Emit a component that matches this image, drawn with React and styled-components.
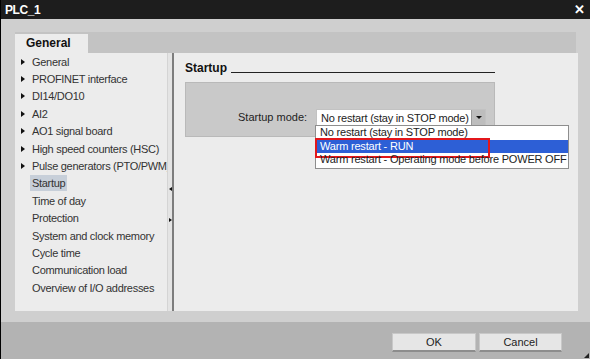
import React from "react";
import styled, { createGlobalStyle } from "styled-components";

const Global = createGlobalStyle`
  html, body { margin: 0; padding: 0; }
  body { width: 590px; height: 359px; overflow: hidden; font-family: "Liberation Sans", Arial, sans-serif; }
  * { box-sizing: border-box; }
`;

const Window = styled.div`
  width: 590px;
  height: 359px;
  display: flex;
  flex-direction: column;
  border-left: 1px solid #000;
  background: #cfcfcf;
  position: relative;
`;

const TitleBar = styled.div`
  height: 19px;
  background: #1d1d1d;
  display: flex;
  align-items: center;
  justify-content: space-between;
  padding: 0 5px 0 4px;
  color: #fff;
  font-weight: bold;
  font-size: 12px;
  letter-spacing: -0.4px;
`;

const Close = styled.span`
  font-size: 13px;
  font-weight: bold;
  line-height: 1;
`;

const Body = styled.div`
  flex: 1;
  display: flex;
  flex-direction: column;
  padding: 13px 12px 11px 14px;
  background: #cfcfcf;
`;

const TabStrip = styled.div`
  height: 21px;
  background: #c3c3c3;
  display: flex;
  align-items: flex-end;
  margin-right: 2px;
`;

const Tab = styled.div`
  width: 73px;
  height: 19px;
  background: #ececec;
  font-weight: bold;
  font-size: 12px;
  color: #111;
  padding-left: 11px;
  line-height: 19px;
`;

const Main = styled.div`
  flex: 1;
  display: flex;
  background: #ececec;
  min-height: 0;
`;

const Nav = styled.div`
  width: 152px;
  flex-shrink: 0;
  display: flex;
  flex-direction: column;
  overflow: hidden;
`;

const NavItem = styled.div`
  height: 17.4px;
  display: flex;
  align-items: center;
  font-size: 11px;
  letter-spacing: -0.3px;
  color: #333;
  white-space: nowrap;
  padding-left: 6px;
`;

const Arrow = styled.span`
  width: 11px;
  flex-shrink: 0;
  display: inline-flex;
  align-items: center;
  &::before {
    content: "";
    display: ${(p) => (p.$show ? "block" : "none")};
    border-left: 4px solid #111;
    border-top: 3px solid transparent;
    border-bottom: 3px solid transparent;
  }
`;

const Label = styled.span`
  flex-shrink: 0;
  padding: 2px;
  margin-left: -2px;
  background: ${(p) => (p.$selected ? "#c7cfd9" : "transparent")};
`;

const Splitter = styled.div`
  width: 7px;
  flex-shrink: 0;
  display: flex;
  flex-direction: column;
  background: #e4e4e4;
  border-right: 2px solid #7d7d7d;
  border-left: 1px solid #d4d4d4;
  padding-top: 134px;
  gap: 27px;
  align-items: center;
`;

const SplitArrow = styled.span`
  width: 0;
  height: 0;
  border-top: 2.5px solid transparent;
  border-bottom: 2.5px solid transparent;
  ${(p) => (p.$dir === "left" ? "border-right: 3px solid #111;" : "border-left: 3px solid #111;")}
`;

const Content = styled.div`
  flex: 1;
  padding: 7px 0 0 11px;
  position: relative;
`;

const Heading = styled.div`
  display: flex;
  align-items: flex-end;
  width: 310px;
  font-size: 12px;
  font-weight: bold;
  color: #111;
  height: 15px;
  &::after {
    content: "";
    flex: 1;
    margin-left: 4px;
    margin-bottom: 2px;
    border-bottom: 1px solid #222;
  }
`;

const GroupBox = styled.div`
  margin-top: 7px;
  width: 310px;
  height: 55px;
  background: #c9c9c9;
  border: 1px solid #b9b9b9;
  display: flex;
  align-items: flex-start;
  padding: 26px 0 0 52px;
  font-size: 11px;
  color: #222;
`;

const FieldLabel = styled.span`
  width: 73px;
  line-height: 16px;
  white-space: nowrap;
`;

const Select = styled.div`
  margin-left: 5px;
  width: 170px;
  height: 17px;
  background: #fff;
  border: 1px solid #c2c2c2;
  display: flex;
  align-items: center;
  padding-left: 4px;
  font-size: 11px;
  letter-spacing: -0.2px;
  color: #222;
  justify-content: space-between;
  white-space: nowrap;
  overflow: hidden;
`;

const DropBtn = styled.span`
  width: 14px;
  height: 15px;
  flex-shrink: 0;
  background: #bdbdbd;
  border-left: 1px solid #9a9a9a;
  display: flex;
  align-items: center;
  justify-content: center;
  svg { display: block; }
`;

const List = styled.div`
  position: absolute;
  left: 141px;
  top: 72px;
  width: 254px;
  background: #fff;
  border: 1px solid #8e8e8e;
  display: flex;
  flex-direction: column;
  padding: 0 0 1px 0;
`;

const Option = styled.div`
  height: 13.5px;
  line-height: 13.5px;
  font-size: 11px;
  letter-spacing: -0.2px;
  padding-left: 4px;
  white-space: nowrap;
  color: ${(p) => (p.$active ? "#fff" : "#222")};
  background: ${(p) => (p.$active ? "#2d5fd6" : "transparent")};
  position: relative;
  ${(p) =>
    p.$active
      ? `&::after {
      content: "";
      position: absolute;
      left: -1px; top: -2px;
      width: 171px; height: 16px;
      border: 2px solid #e3171b;
    }`
      : ""}
`;

const Footer = styled.div`
  height: 37px;
  flex-shrink: 0;
  background: #b3b3b3;
  display: flex;
  justify-content: flex-end;
  align-items: flex-start;
  padding: 11px 28px 0 0;
  gap: 3px;
  position: relative;
`;

const Button = styled.button`
  width: ${(p) => p.$w}px;
  height: 19px;
  background: #e6e6e6;
  border: 1px solid #c8c8c8;
  border-bottom: 2px solid #8d8d8d;
  font-family: "Liberation Sans", Arial, sans-serif;
  font-size: 11px;
  color: #222;
  padding: 0;
`;

const Grip = styled.span`
  position: absolute;
  right: 1px;
  bottom: 1px;
  width: 0;
  height: 0;
  border-left: 5px solid transparent;
  border-bottom: 5px solid #222;
`;

const navItems = [
  ["General", true],
  ["PROFINET interface", true],
  ["DI14/DO10", true],
  ["AI2", true],
  ["AO1 signal board", true],
  ["High speed counters (HSC)", true],
  ["Pulse generators (PTO/PWM)", true],
  ["Startup", false, true],
  ["Time of day", false],
  ["Protection", false],
  ["System and clock memory", false],
  ["Cycle time", false],
  ["Communication load", false],
  ["Overview of I/O addresses", false],
];

export default function App() {
  return (
    <>
      <Global />
      <Window>
        <TitleBar>
          <span>PLC_1</span>
          <Close>✕</Close>
        </TitleBar>
        <Body>
          <TabStrip>
            <Tab>General</Tab>
          </TabStrip>
          <Main>
            <Nav>
              {navItems.map(([t, arr, sel]) => (
                <NavItem key={t}>
                  <Arrow $show={arr} />
                  <Label $selected={sel}>{t}</Label>
                </NavItem>
              ))}
            </Nav>
            <Splitter>
              <SplitArrow $dir="left" />
              <SplitArrow $dir="right" />
            </Splitter>
            <Content>
              <Heading>Startup</Heading>
              <GroupBox>
                <FieldLabel>Startup mode:</FieldLabel>
                <Select>
                  <span>No restart (stay in STOP mode)</span>
                  <DropBtn>
                    <svg width="8" height="6" viewBox="0 0 8 6">
                      <path d="M1 1h6L4 4z" fill="#111" />
                    </svg>
                  </DropBtn>
                </Select>
              </GroupBox>
              <List>
                <Option>No restart (stay in STOP mode)</Option>
                <Option $active>Warm restart - RUN</Option>
                <Option>Warm restart - Operating mode before POWER OFF</Option>
              </List>
            </Content>
          </Main>
        </Body>
        <Footer>
          <Button $w={84}>OK</Button>
          <Button $w={83}>Cancel</Button>
          <Grip />
        </Footer>
      </Window>
    </>
  );
}
